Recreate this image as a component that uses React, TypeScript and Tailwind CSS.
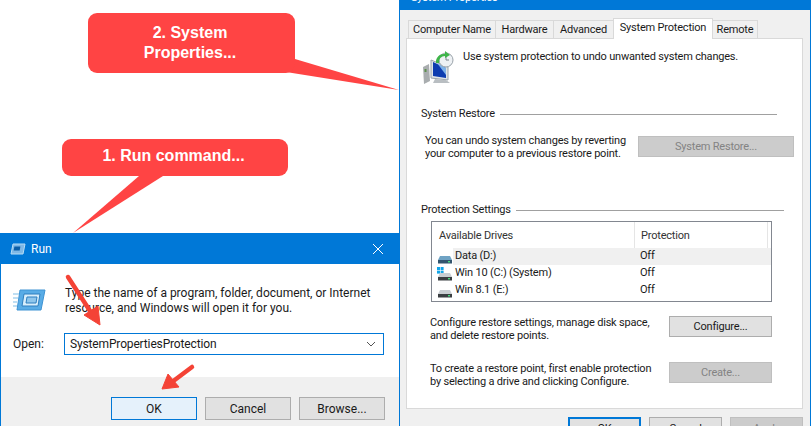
import React from "react";

const font = "font-['Roboto','Noto_Sans',sans-serif]";

function Btn({ children, className = "" }: { children: React.ReactNode; className?: string }) {
  return (
    <div className={`flex shrink-0 items-center justify-center border leading-none ${className}`}>{children}</div>
  );
}

function Legend({ label, w }: { label: string; w: string }) {
  return (
    <div className="flex items-center h-[14px] leading-[14px] text-[#1a1a1a]">
      <span>{label}</span>
      <span className={`ml-[5px] h-px bg-[#a0a0a0] ${w}`} />
    </div>
  );
}

function DriveIcon({ win, tint }: { win?: boolean; tint?: boolean }) {
  return (
    <svg width="16" height="14" viewBox="0 0 16 14" className="shrink-0">
      {win && (
        <g fill="#12a5e8">
          <rect x="0" y="0" width="3" height="3" />
          <rect x="3.6" y="0" width="3" height="3" />
          <rect x="0" y="3.6" width="3" height="3" />
          <rect x="3.6" y="3.6" width="3" height="3" />
        </g>
      )}
      <path d="M3 6 H13 L15 10 H1 Z" fill={tint ? "#6fa3c4" : "#c9ced2"} />
      <rect x="1" y="10" width="14" height="3.5" fill={tint ? "#33556e" : "#3b3f42"} />
      <rect x="11" y="11" width="2" height="1.4" fill="#4ade80" />
    </svg>
  );
}

function Row({ name, icon, selected }: { name: string; icon: React.ReactNode; selected?: boolean }) {
  return (
    <div className="flex h-[17px] items-center text-[#1a1a1a]">
      <div className="w-[21px] pl-[5px] flex">{icon}</div>
      <div className={`flex flex-1 h-full items-center ${selected ? "bg-[#f0f0f0]" : ""}`}>
        <span className="w-[187px] pl-[2px]">{name}</span>
        <span>Off</span>
      </div>
    </div>
  );
}

function Tab({ label, w, active }: { label: string; w: string; active?: boolean }) {
  return (
    <div
      className={`${w} flex items-center justify-center whitespace-nowrap border border-[#d9d9d9] leading-none text-[#1a1a1a] ${
        active ? "h-[21px] bg-white border-b-0 -mb-px z-10 pb-[3px] -ml-px" : "h-[18px] bg-[#f0f0f0] border-b-0 -ml-px pb-[1px]"
      }`}
    >
      {label}
    </div>
  );
}

export default function App() {
  return (
    <div className={`relative w-[811px] h-[426px] overflow-hidden bg-white ${font}`}>
      {/* System Properties dialog */}
      <div className="absolute left-[399px] top-[-20px] w-[412px] h-[470px] border border-[#0078d7] bg-[#f0f0f0] flex flex-col text-[11px] tracking-[-0.2px]">
        <div className="h-[29px] shrink-0 bg-[#0078d7] text-white leading-none pl-[11px] pt-[11px]">
          System Properties
        </div>
        <div className="flex pl-[9px] pt-[7px] h-[28px] shrink-0 items-end">
          <Tab label="Computer Name" w="w-[88px]" />
          <Tab label="Hardware" w="w-[59px]" />
          <Tab label="Advanced" w="w-[61px]" />
          <Tab label="System Protection" w="w-[100px]" active />
          <Tab label="Remote" w="w-[46px]" />
        </div>
        <div className="ml-[6px] w-[397px] h-[371px] shrink-0 bg-white border border-[#d9d9d9] pl-[14px]">
          <div className="flex h-[56px] pt-[12px]">
            <svg width="32" height="33" viewBox="0 0 32 33" className="ml-[1px] shrink-0">
              <path d="M1 16 L7 13 L8 30 L2 33 Z" fill="#a9adaf" />
              <rect x="2.5" y="18" width="2" height="3" fill="#5e8f4e" />
              <path d="M9 9 L26 16 L26 29 L9 27 Z" fill="#dfe4e8" stroke="#9aa3aa" />
              <path d="M11 11 L24 17 L24 27 L11 25 Z" fill="#0d3cb0" />
              <path d="M15 12 L24 17 L24 24 Z" fill="#7fb2e8" />
              <path d="M13 28 L24 29 L28 32 L11 32 Z" fill="#b9bec2" />
              <circle cx="24" cy="9" r="7" fill="#eef1f4" stroke="#9aa3aa" />
              <path d="M24 5 V9 H27" fill="none" stroke="#7a848c" />
              <path d="M14 12 A8 8 0 0 1 23 3 L23 0 L28 4 L23 7 V5 A6 6 0 0 0 17 12 Z" fill="#3fb54a" />
            </svg>
            <span className="ml-[9px] -mt-px leading-[14px] text-[#1a1a1a] whitespace-nowrap">
              Use system protection to undo unwanted system changes.
            </span>
          </div>
          <div className="mt-[12px]">
            <Legend label="System Restore" w="w-[277px]" />
          </div>
          <div className="flex items-start mt-[15px]">
            <div className="ml-[4px] w-[213px] -mt-[2px] leading-[13px] text-[#1a1a1a] whitespace-nowrap">
              You can undo system changes by reverting
              <br />
              your computer to a previous restore point.
            </div>
            <Btn className="w-[156px] h-[21px] bg-[#cccccc] border-[#bfbfbf] text-[#838383]">System Restore...</Btn>
          </div>
          <div className="mt-[43px]">
            <Legend label="Protection Settings" w="w-[268px]" />
          </div>
          <div className="ml-[10px] mt-[4px] w-[341px] h-[81px] border-[1.5px] border-[#828790] flex flex-col">
            <div className="flex h-[26px] shrink-0 items-center text-[#333]">
              <span className="w-[203px] pl-[7px] pt-[2px] h-full flex items-center border-r border-[#e5e5e5]">Available Drives</span>
              <span className="pl-[6px] pt-[2px] flex-1 h-full flex items-center border-r border-[#e5e5e5] mr-[3px]">Protection</span>
            </div>
            <Row name="Data (D:)" icon={<DriveIcon tint />} selected />
            <Row name="Win 10 (C:) (System)" icon={<DriveIcon win />} />
            <Row name="Win 8.1 (E:)" icon={<DriveIcon />} />
          </div>
          <div className="flex mt-[14px] ml-[9px]">
            <div className="w-[239px] leading-[13px] text-[#1a1a1a] whitespace-nowrap">
              Configure restore settings, manage disk space,
              <br />
              and delete restore points.
            </div>
            <Btn className="w-[103px] h-[21px] bg-[#e1e1e1] border-[#adadad] text-[#1a1a1a]">Configure...</Btn>
          </div>
          <div className="flex mt-[20px] ml-[9px]">
            <div className="w-[239px] leading-[13px] text-[#1a1a1a] whitespace-nowrap">
              To create a restore point, first enable protection
              <br />
              by selecting a drive and clicking Configure.
            </div>
            <Btn className="w-[103px] h-[21px] bg-[#cccccc] border-[#bfbfbf] text-[#838383]">Create...</Btn>
          </div>
        </div>
        <div className="flex gap-[8px] ml-[168px] mt-[8px]">
          <Btn className="w-[73px] h-[23px] border-2 border-[#0078d7] bg-[#e1e1e1] text-[#1a1a1a]">OK</Btn>
          <Btn className="w-[73px] h-[23px] border-[#adadad] bg-[#e1e1e1] text-[#1a1a1a]">Cancel</Btn>
          <Btn className="w-[73px] h-[23px] border-[#bfbfbf] bg-[#cccccc] text-[#838383]">Apply</Btn>
        </div>
      </div>

      {/* Run dialog */}
      <div className="absolute left-0 top-[233px] w-[399px] h-[200px] border border-[#0078d7] border-r-0 bg-white flex flex-col text-[12px]">
        <div className="h-[30px] shrink-0 bg-[#0078d7] flex items-center text-white pl-[9px]">
          <svg width="16" height="12" viewBox="0 0 16 12" className="shrink-0">
            <path d="M3 1 H15 L13 11 H1 Z" fill="#7fb8e6" stroke="#b6dcf5" />
            <rect x="5" y="3.5" width="6" height="4" fill="#0a5ea8" transform="skewX(-10)" />
          </svg>
          <span className="ml-[5px]">Run</span>
          <svg width="12" height="12" viewBox="0 0 12 12" className="ml-auto mr-[15px]">
            <path d="M1 1 L11 11 M11 1 L1 11" stroke="white" strokeWidth="1" />
          </svg>
        </div>
        <div className="h-[113px] shrink-0 pl-[12px]">
          <div className="flex pt-[22px]">
            <svg width="33" height="22" viewBox="0 0 33 22" className="shrink-0 mt-[3px]">
              <path d="M7 1 H32 L28 21 H4 Z" fill="#59ace6" stroke="#3e93d3" />
              <path d="M11 5 H27 L25 17 H9 Z" fill="#d8eefb" stroke="#2f7fbf" />
              <path d="M14 8 H24 L23 14 H13 Z" fill="#8fc6ec" stroke="#2f7fbf" />
              <path d="M0 5 H6 M0 9 H5 M0 13 H4 M0 17 H4" stroke="#a9d3ef" strokeWidth="1.5" />
            </svg>
            <div className="ml-[19px] w-[320px] leading-[15px] text-[#1a1a1a] whitespace-nowrap">
              Type the name of a program, folder, document, or Internet
              <br />
              resource, and Windows will open it for you.
            </div>
          </div>
          <div className="flex items-center mt-[17px]">
            <span className="w-[51px] text-[#1a1a1a]">Open:</span>
            <div className="w-[320px] h-[22px] border border-[#0078d7] flex items-center pl-[5px] pr-[7px] text-[#1a1a1a] tracking-[-0.15px]">
              SystemPropertiesProtection
              <svg width="10" height="6" viewBox="0 0 10 6" className="ml-auto">
                <path d="M1 1 L5 5 L9 1" fill="none" stroke="#555" />
              </svg>
            </div>
          </div>
        </div>
        <div className="flex-1 bg-[#f0f0f0] flex gap-[8px] pl-[110px] pt-[20px]">
          <Btn className="w-[86px] h-[23px] border-[#0078d7] bg-[#e5f1fb] text-[#1a1a1a]">OK</Btn>
          <Btn className="w-[86px] h-[23px] border-[#adadad] bg-[#e1e1e1] text-[#1a1a1a]">Cancel</Btn>
          <Btn className="w-[86px] h-[23px] border-[#adadad] bg-[#e1e1e1] text-[#1a1a1a]">Browse...</Btn>
        </div>
      </div>

      {/* Red arrows */}
      <svg width="811" height="426" viewBox="0 0 811 426" className="absolute left-0 top-0 pointer-events-none">
        <path d="M68 277 L92 314" stroke="#f44336" strokeWidth="4.5" strokeLinecap="round" />
        <path d="M100 325 L84 315 L98 306 Z" fill="#f44336" stroke="#f44336" />
        <path d="M192 367 L172 382" stroke="#f44336" strokeWidth="4.5" strokeLinecap="round" />
        <path d="M162 389 L168 374 L179 387 Z" fill="#f44336" stroke="#f44336" />
        <path d="M295 59 L399 90 L286 72 Z" fill="#ff4444" />
        <path d="M139 176 L163 176 L73 233 Z" fill="#ff4444" />
      </svg>

      {/* Callouts */}
      <div className="absolute left-[88px] top-[13px] w-[207px] h-[60px] rounded-[9px] bg-[#ff4444] flex items-center justify-center text-center text-white font-bold text-[16px] leading-[20px] font-['Liberation_Sans',sans-serif] pr-[3px]">
        <span className="w-[110px]">2. System Properties...</span>
      </div>
      <div className="absolute left-[62px] top-[139px] w-[226px] h-[37px] rounded-[9px] bg-[#ff4444] flex items-center justify-center text-white font-bold text-[16px] font-['Liberation_Sans',sans-serif] pr-[3px]">
        <span className="-mt-[3px]">1. Run command...</span>
      </div>
    </div>
  );
}
